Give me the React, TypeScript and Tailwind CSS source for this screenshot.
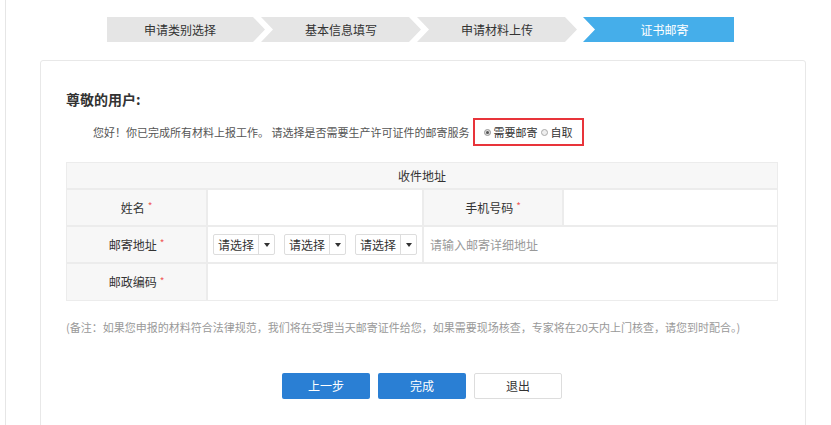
import React from "react";
import clsx from "clsx";

const font = { fontFamily: '"Noto Sans CJK SC", "Noto Sans", sans-serif' };

const steps = ["申请类别选择", "基本信息填写", "申请材料上传", "证书邮寄"];

const clipFirst = "polygon(0 0, calc(100% - 12px) 0, 100% 50%, calc(100% - 12px) 100%, 0 100%)";
const clipMid =
  "polygon(0 0, calc(100% - 12px) 0, 100% 50%, calc(100% - 12px) 100%, 0 100%, 12px 50%)";
const clipLast = "polygon(0 0, 100% 0, 100% 100%, 0 100%, 12px 50%)";

const Steps = () => (
  <div className="flex h-[25px] pl-[107px]">
    {steps.map((s, i) => {
      const last = i === steps.length - 1;
      return (
        <div
          key={s}
          style={{ clipPath: i === 0 ? clipFirst : last ? clipLast : clipMid }}
          className={clsx(
            "flex items-center justify-center text-[12px] h-full",
            i === 0 && "w-[158px] pr-[12px]",
            i > 0 && !last && "w-[160px] -ml-[4px]",
            last ? "bg-[#45aeea] text-white w-[151px] ml-[6px] pl-[12px]" : "bg-[#e5e5e5] text-[#333]"
          )}
        >
          {s}
        </div>
      );
    })}
  </div>
);

const Star = () => <span className="text-[#f05a5a] text-[10px] ml-[3px] relative -top-[2px]">*</span>;

const Label = ({ children, w }: { children: React.ReactNode; w: string }) => (
  <div className={clsx("flex items-center justify-center bg-[#f7f7f7] text-[12px] text-[#333] shrink-0", w)}>
    {children}
    <Star />
  </div>
);

const Select = () => (
  <div className="flex h-[21px] w-[62px] border border-[#ddd] rounded-[2px] bg-white text-[12px] text-[#333]">
    <div className="flex-1 flex items-center pl-[4px]">请选择</div>
    <div className="w-[16px] border-l border-[#ddd] flex items-center justify-center">
      <span className="block w-0 h-0 border-l-[3px] border-r-[3px] border-t-[4px] border-l-transparent border-r-transparent border-t-[#333]" />
    </div>
  </div>
);

export default function App() {
  return (
    <div className="w-[831px] h-[425px] overflow-hidden bg-white relative" style={font}>
      <div className="absolute left-[5px] top-0 bottom-0 w-px bg-[#e6e6e6]" />
      <div className="pt-[17px]">
        <Steps />
      </div>
      <div className="ml-[40px] mr-[25px] mt-[18px] border border-[#e8e8e8] rounded-[3px] h-[400px] px-[25px]">
        <div className="pt-[28px] text-[14px] font-bold text-[#333] leading-[20px]">尊敬的用户:</div>
        <div className="flex items-center mt-[9px] pl-[27px] text-[11px] text-[#555] h-[28px]">
          <span>您好！你已完成所有材料上报工作。 请选择是否需要生产许可证件的邮寄服务</span>
          <div className="ml-[4px] h-[28px] w-[111px] border-2 border-[#e8343a] flex items-center pl-[9px] text-[#333]">
            <span className="w-[7px] h-[7px] rounded-full border border-[#999] bg-[#ddd] flex items-center justify-center mr-[2px]">
              <span className="w-[3px] h-[3px] rounded-full bg-[#555]" />
            </span>
            需要邮寄
            <span className="w-[7px] h-[7px] rounded-full border border-[#aaa] bg-[#eee] ml-[4px] mr-[2px]" />
            自取
          </div>
        </div>
        <div className="mt-[16px] w-[712px] border border-[#ececec] bg-[#ececec] flex flex-col gap-[2px]">
          <div className="h-[25px] bg-[#f7f7f7] flex items-center justify-center text-[12px] text-[#333]">收件地址</div>
          <div className="flex h-[35px] gap-[2px]">
            <Label w="w-[139px]">姓名</Label>
            <div className="w-[214px] bg-white" />
            <Label w="w-[138px]">手机号码</Label>
            <div className="flex-1 bg-white" />
          </div>
          <div className="flex h-[35px] gap-[2px]">
            <Label w="w-[139px]">邮寄地址</Label>
            <div className="w-[214px] bg-white flex items-center gap-[9px] pl-[5px]">
              <Select />
              <Select />
              <Select />
            </div>
            <div className="flex-1 bg-white flex items-center pl-[6px] text-[12px] text-[#999]">请输入邮寄详细地址</div>
          </div>
          <div className="flex h-[36px] gap-[2px]">
            <Label w="w-[139px]">邮政编码</Label>
            <div className="flex-1 bg-white" />
          </div>
        </div>
        <div className="mt-[17px] text-[11px] text-[#999] leading-[18px] whitespace-nowrap">
          (备注：如果您申报的材料符合法律规范，我们将在受理当天邮寄证件给您，如果需要现场核查，专家将在20天内上门核查，请您到时配合。)
        </div>
        <div className="flex gap-[8px] mt-[37px] pl-[216px]">
          <button className="w-[88px] h-[26px] bg-[#2a7fd4] text-white text-[12px] rounded-[2px]">上一步</button>
          <button className="w-[88px] h-[26px] bg-[#2a7fd4] text-white text-[12px] rounded-[2px]">完成</button>
          <button className="w-[88px] h-[26px] bg-white border border-[#ddd] text-[#333] text-[12px] rounded-[2px]">退出</button>
        </div>
      </div>
    </div>
  );
}
